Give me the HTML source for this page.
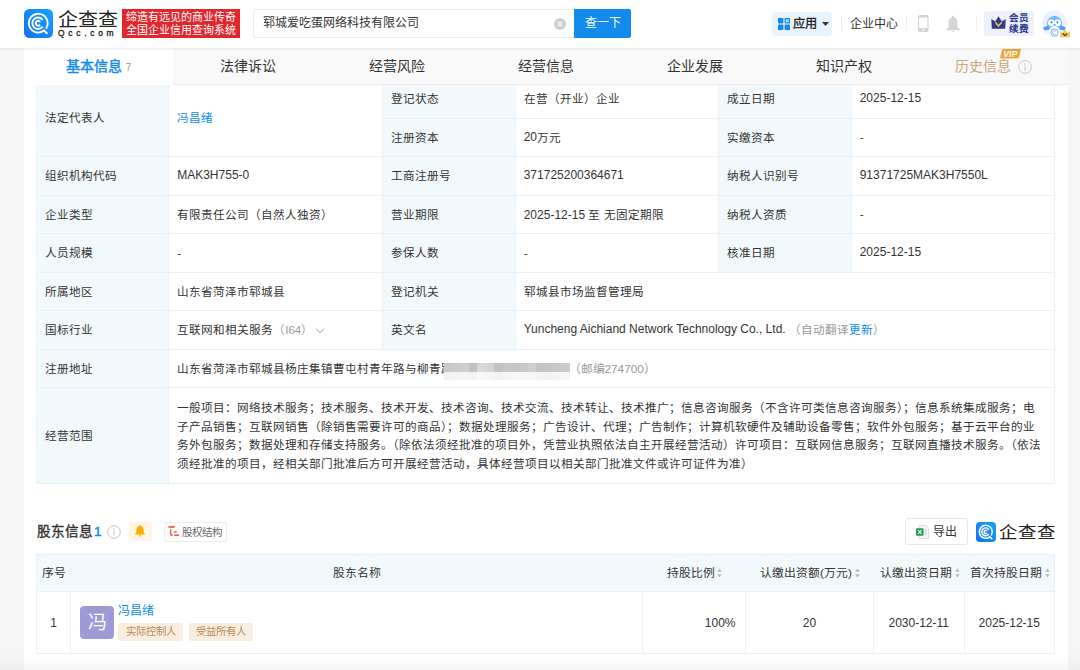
<!DOCTYPE html>
<html lang="zh-CN">
<head>
<meta charset="utf-8">
<style>
*{box-sizing:border-box;margin:0;padding:0}
html,body{width:1080px;height:670px;overflow:hidden}
body{position:relative;background:#f6f6f6;font-family:"Liberation Sans",sans-serif;color:#333;font-size:11.8px}
.abs{position:absolute}
.nw{white-space:nowrap}
/* header */
#hdr{position:absolute;left:0;top:0;width:1080px;height:48px;background:#fff;box-shadow:0 1px 2px rgba(0,0,0,.09);z-index:5}
#card{position:absolute;left:24px;top:48px;width:1044px;height:622px;background:#fff}
/* tabs */
#tabs{position:absolute;left:24px;top:48px;width:1044px;height:36.8px;background:#f9f9f9;border-bottom:1px solid #ececec;z-index:4}
.tab{position:absolute;top:0;height:36px;width:149.14px;text-align:center;line-height:37.4px;font-size:14px;color:#333}
.tab.on{background:#fff;color:#128bed;height:37px;-webkit-text-stroke:0.45px #128bed}
/* table */
.cell{position:absolute;border-right:1px solid #e9f1f8;border-bottom:1px solid #e9f1f8;padding-left:8.2px;padding-bottom:1px;display:flex;align-items:center;white-space:nowrap;font-size:11.6px;color:#333}
.en{font-size:12px}
.lb{background:#f2f9fc}
.blue{color:#128bed}
.grey{color:#999}
</style>
</head>
<body>
<div id="hdr">
  <!-- logo icon -->
  <svg class="abs" style="left:24px;top:9px" width="29" height="29" viewBox="0 0 29 29">
    <defs><linearGradient id="lg" x1="0" y1="1" x2="1" y2="0"><stop offset="0" stop-color="#1470f4"/><stop offset="1" stop-color="#16a3fb"/></linearGradient></defs>
    <rect width="29" height="29" rx="5.5" fill="url(#lg)"/>
    <g fill="none" stroke="#fff" stroke-width="1.9" stroke-linecap="round">
      <path d="M20.0 21.6 A9.4 9.4 0 1 1 22.3 19.0"/>
      <path d="M20.1 21.6 L22.9 24.2"/>
      <path d="M18.2 18.2 A5.7 5.7 0 1 1 18.2 10.3"/>
      <path d="M15.6 16.3 A2.4 2.4 0 1 1 15.7 12.4"/>
    </g>
  </svg>
  <div class="abs nw" style="left:57.5px;top:9.3px;font-size:20px;line-height:24px;letter-spacing:0.4px;color:#222;transform:scaleY(0.9);transform-origin:0 0">企查查</div>
  <div class="abs nw" style="left:58px;top:28px;font-size:8.4px;line-height:10px;letter-spacing:3.75px;color:#222;-webkit-text-stroke:0.3px #222">Qcc.com</div>
  <!-- red slogan -->
  <div class="abs" style="left:122px;top:9px;width:118px;height:29px;background:#e3262c;color:#fff;font-size:11px;line-height:12.3px;padding-top:2.3px;text-align:center;white-space:nowrap">缔造有远见的商业传奇<br>全国企业信用查询系统</div>
  <!-- search -->
  <div class="abs" style="left:253px;top:9px;width:322px;height:29px;border:1px solid #ececec;border-right:none;border-radius:3px 0 0 3px;background:#fff"></div>
  <div class="abs nw" style="left:263px;top:15px;font-size:12px;line-height:17px;color:#333">郓城爱吃蛋网络科技有限公司</div>
  <div class="abs" style="left:554px;top:17.7px;width:12px;height:12px;border-radius:50%;background:#cfcfcf"></div>
  <svg class="abs" style="left:554px;top:17.7px" width="12" height="12" viewBox="0 0 12 12"><path d="M4 4 L8 8 M8 4 L4 8" stroke="#fff" stroke-width="1.1"/></svg>
  <div class="abs" style="left:574px;top:9px;width:57px;height:29px;background:#128bed;border-radius:0 2px 2px 0;color:#fff;font-size:12px;line-height:28px;text-align:center">查一下</div>
  <!-- app -->
  <div class="abs" style="left:772px;top:12px;width:60px;height:23.5px;background:#e8f3fe;border-radius:4px"></div>
  <svg class="abs" style="left:777.5px;top:18px" width="12" height="12" viewBox="0 0 12 12">
    <rect x="0" y="0" width="5.4" height="5.4" rx="0.6" fill="#128bed"/>
    <rect x="6.6" y="0" width="5.4" height="5.4" rx="0.6" fill="#128bed"/>
    <rect x="7.8" y="1.2" width="3" height="3" rx="0.3" fill="#b9dcfb"/>
    <rect x="0" y="6.6" width="5.4" height="5.4" rx="0.6" fill="#128bed"/>
    <rect x="6.6" y="6.6" width="5.4" height="5.4" rx="0.6" fill="#128bed"/>
  </svg>
  <div class="abs nw" style="left:793px;top:15px;font-size:12.2px;line-height:18px;color:#222;-webkit-text-stroke:0.35px #222">应用</div>
  <svg class="abs" style="left:821.5px;top:21.5px" width="7" height="4" viewBox="0 0 7 4"><path d="M0 0 L7 0 L3.5 4 Z" fill="#333"/></svg>
  <div class="abs" style="left:841px;top:15px;width:1px;height:16px;background:#eee"></div>
  <div class="abs nw" style="left:849.5px;top:14.5px;font-size:12px;line-height:18px;color:#333">企业中心</div>
  <div class="abs" style="left:906px;top:15px;width:1px;height:16px;background:#eee"></div>
  <!-- phone -->
  <svg class="abs" style="left:918px;top:15px" width="10.5" height="17" viewBox="0 0 10.5 17"><rect x="0" y="0" width="10.5" height="17" rx="2.2" fill="#d2d2d2"/><rect x="1.1" y="2.5" width="8.3" height="10.7" fill="#fff"/><rect x="3.9" y="14.6" width="2.7" height="1.2" rx="0.6" fill="#fff"/></svg>
  <!-- bell -->
  <svg class="abs" style="left:946px;top:15px" width="14" height="17" viewBox="0 0 14 17">
    <path d="M7 0.6 C7.6 0.6 7.9 1 7.9 1.6 L7.9 2.3 C10.3 2.8 11.4 4.8 11.4 7.5 L11.4 12.8 L14 14.6 L14 15.2 L0 15.2 L0 14.6 L2.6 12.8 L2.6 7.5 C2.6 4.8 3.7 2.8 6.1 2.3 L6.1 1.6 C6.1 1 6.4 0.6 7 0.6 Z" fill="#d4d4d4"/>
    <rect x="5.8" y="15.9" width="2.4" height="1.1" rx="0.5" fill="#d4d4d4"/>
  </svg>
  <div class="abs" style="left:975.5px;top:15.5px;width:1px;height:15.5px;background:#eee"></div>
  <!-- vip -->
  <div class="abs" style="left:984px;top:11px;width:49.5px;height:25px;background:#eef1fb;border-radius:3px"></div>
  <svg class="abs" style="left:990.5px;top:15.5px" width="15" height="13" viewBox="0 0 15 13">
    <path d="M0.3 3 L4.2 5.6 L7.5 0.3 L10.8 5.6 L14.7 3 L14.2 12.7 L0.8 12.7 Z" fill="#2e3a8c"/>
    <path d="M4.8 6.8 L7.5 10 L10.2 6.8" fill="none" stroke="#f5c04a" stroke-width="1.6" stroke-linecap="round" stroke-linejoin="round"/>
  </svg>
  <div class="abs nw" style="left:1008.5px;top:12px;font-size:9.6px;line-height:11px;font-weight:bold;color:#2e3a8c">会员<br>续费</div>
  <!-- avatar -->
  <svg class="abs" style="left:1036px;top:6px" width="40" height="36" viewBox="0 0 40 36">
    <circle cx="18.5" cy="17.2" r="12.6" fill="#eaf3fd"/>
    <ellipse cx="18.5" cy="18" rx="7.6" ry="8" fill="#74b8f7"/>
    <path d="M18.5 9.6 L19.6 11 L17.4 11 Z" fill="#5aa6f4"/>
    <path d="M12.2 19.5 L7 21.6 L8.6 24.6 L13.5 23.4 Z M24.8 19.5 L30 21.6 L28.4 24.6 L23.5 23.4 Z" fill="#4a9ff5"/>
    <circle cx="15.4" cy="16.8" r="3.4" fill="#fff"/><circle cx="21.6" cy="16.8" r="3.4" fill="#fff"/>
    <ellipse cx="18.5" cy="25.5" rx="5.6" ry="5.4" fill="#fff"/>
    <ellipse cx="15.6" cy="16.2" rx="0.9" ry="1.3" fill="#2f8ff0"/><ellipse cx="21.4" cy="16.2" rx="0.9" ry="1.3" fill="#2f8ff0"/>
    <ellipse cx="18.6" cy="18.6" rx="1.2" ry="0.7" fill="#4aa0f5"/>
    <circle cx="18.5" cy="26.6" r="3.7" fill="none" stroke="#6aaef5" stroke-width="0.9"/>
    <path d="M19.8 25.2 A1.9 1.9 0 1 0 19.8 28" fill="none" stroke="#6aaef5" stroke-width="0.9"/>
    <path d="M24.2 31.3 L24.2 25.2 L26.6 27 L29 23.6 L31.4 27 L33.9 25.2 L33.9 31.3 Z" fill="#f6c54a"/>
    <path d="M26.7 27.4 L29 29.6 L31.3 27.4" fill="none" stroke="#3d3d5c" stroke-width="1.2"/>
  </svg>
</div>

<div id="card"></div>

<div id="tabs">
  <div class="tab on" style="left:0">基本信息 <span style="font-size:10px;color:#999;-webkit-text-stroke:0">7</span></div>
  <div class="tab" style="left:149.14px">法律诉讼</div>
  <div class="tab" style="left:298.28px">经营风险</div>
  <div class="tab" style="left:447.42px">经营信息</div>
  <div class="tab" style="left:596.56px">企业发展</div>
  <div class="tab" style="left:745.7px">知识产权</div>
  <div class="tab" style="left:894.84px;color:#c9a47e">历史信息<span style="display:inline-block;width:21px"></span></div>
  <svg class="abs" style="left:976.3px;top:1.3px" width="21" height="9.5" viewBox="0 0 21 9.5"><path d="M3 0 L21 0 L19.5 7 Q19 9.5 16.5 9.5 L0 9.5 L1.5 2.5 Q2 0 3 0 Z" fill="#f0a43a"/><text x="10.3" y="8" font-family="Liberation Sans" font-size="8.6" font-weight="bold" font-style="italic" fill="#fff" text-anchor="middle">VIP</text></svg>
  <svg class="abs" style="left:993.5px;top:11.7px" width="14" height="14" viewBox="0 0 14 14"><circle cx="7" cy="7" r="6.3" fill="none" stroke="#c8c8c8" stroke-width="1"/><circle cx="7" cy="4.1" r="0.8" fill="#c8c8c8"/><path d="M7 6 L7 10.4" stroke="#c8c8c8" stroke-width="1.1"/></svg>

</div>


<div id="tbl">
<div class="cell lb" style="left:36px;top:80px;width:133px;height:77px;border-left:1px solid #e9f1f8;padding-bottom:3px">法定代表人</div>
<div class="cell" style="left:169px;top:80px;width:214px;height:77px;padding-bottom:3px"><span class="blue">冯昌绪</span></div>
<div class="cell lb" style="left:383px;top:80px;width:132.5px;height:38.5px;">登记状态</div>
<div class="cell" style="left:515.5px;top:80px;width:203px;height:38.5px;">在营（开业）企业</div>
<div class="cell lb" style="left:718.5px;top:80px;width:133px;height:38.5px;">成立日期</div>
<div class="cell" style="left:851.5px;top:80px;width:203.5px;height:38.5px;"><span class="en">2025-12-15</span></div>
<div class="cell lb" style="left:383px;top:118.5px;width:132.5px;height:38.5px;">注册资本</div>
<div class="cell" style="left:515.5px;top:118.5px;width:203px;height:38.5px;"><span class="en">20</span>万元</div>
<div class="cell lb" style="left:718.5px;top:118.5px;width:133px;height:38.5px;">实缴资本</div>
<div class="cell" style="left:851.5px;top:118.5px;width:203.5px;height:38.5px;">-</div>
<div class="cell lb" style="left:36px;top:157px;width:133px;height:38.5px;border-left:1px solid #e9f1f8;">组织机构代码</div>
<div class="cell" style="left:169px;top:157px;width:214px;height:38.5px;"><span class="en">MAK3H755-0</span></div>
<div class="cell lb" style="left:383px;top:157px;width:132.5px;height:38.5px;">工商注册号</div>
<div class="cell" style="left:515.5px;top:157px;width:203px;height:38.5px;"><span class="en">371725200364671</span></div>
<div class="cell lb" style="left:718.5px;top:157px;width:133px;height:38.5px;">纳税人识别号</div>
<div class="cell" style="left:851.5px;top:157px;width:203.5px;height:38.5px;"><span class="en">91371725MAK3H7550L</span></div>
<div class="cell lb" style="left:36px;top:195.5px;width:133px;height:38.5px;border-left:1px solid #e9f1f8;">企业类型</div>
<div class="cell" style="left:169px;top:195.5px;width:214px;height:38.5px;">有限责任公司（自然人独资）</div>
<div class="cell lb" style="left:383px;top:195.5px;width:132.5px;height:38.5px;">营业期限</div>
<div class="cell" style="left:515.5px;top:195.5px;width:203px;height:38.5px;"><span><span class="en">2025-12-15 </span>至<span class="en"> </span>无固定期限</span></div>
<div class="cell lb" style="left:718.5px;top:195.5px;width:133px;height:38.5px;">纳税人资质</div>
<div class="cell" style="left:851.5px;top:195.5px;width:203.5px;height:38.5px;">-</div>
<div class="cell lb" style="left:36px;top:234px;width:133px;height:38.5px;border-left:1px solid #e9f1f8;">人员规模</div>
<div class="cell" style="left:169px;top:234px;width:214px;height:38.5px;">-</div>
<div class="cell lb" style="left:383px;top:234px;width:132.5px;height:38.5px;">参保人数</div>
<div class="cell" style="left:515.5px;top:234px;width:203px;height:38.5px;">-</div>
<div class="cell lb" style="left:718.5px;top:234px;width:133px;height:38.5px;">核准日期</div>
<div class="cell" style="left:851.5px;top:234px;width:203.5px;height:38.5px;"><span class="en">2025-12-15</span></div>
<div class="cell lb" style="left:36px;top:272.5px;width:133px;height:38.5px;border-left:1px solid #e9f1f8;">所属地区</div>
<div class="cell" style="left:169px;top:272.5px;width:214px;height:38.5px;">山东省菏泽市郓城县</div>
<div class="cell lb" style="left:383px;top:272.5px;width:132.5px;height:38.5px;">登记机关</div>
<div class="cell" style="left:515.5px;top:272.5px;width:539.5px;height:38.5px;">郓城县市场监督管理局</div>
<div class="cell lb" style="left:36px;top:311px;width:133px;height:38.5px;border-left:1px solid #e9f1f8;">国标行业</div>
<div class="cell" style="left:169px;top:311px;width:214px;height:38.5px;">互联网和相关服务<span class="grey">（I64）</span><svg style="margin-left:2px;position:relative;top:1.5px" width="10" height="6" viewBox="0 0 10 6"><path d="M1 0.8 L5 4.8 L9 0.8" fill="none" stroke="#999" stroke-width="1"/></svg></div>
<div class="cell lb" style="left:383px;top:311px;width:132.5px;height:38.5px;">英文名</div>
<div class="cell" style="left:515.5px;top:311px;width:539.5px;height:38.5px;"><span class="en">Yuncheng Aichiand Network Technology Co., Ltd.</span><span class="grey" style="margin-left:3.3px">（自动翻译<span class="blue">更新</span>）</span></div>
<div class="cell lb" style="left:36px;top:349.5px;width:133px;height:38.5px;border-left:1px solid #e9f1f8;">注册地址</div>
<div class="cell" style="left:169px;top:349.5px;width:886px;height:38.5px;">山东省菏泽市郓城县杨庄集镇曹屯村青年路与柳青路</div>
<div class="cell lb" style="left:36px;top:388px;width:133px;height:95.5px;border-left:1px solid #e9f1f8;">经营范围</div>
<div class="cell" style="left:169px;top:388px;width:886px;height:95.5px;line-height:18.5px;padding-bottom:0;padding-top:1.5px"><div>一般项目：网络技术服务；技术服务、技术开发、技术咨询、技术交流、技术转让、技术推广；信息咨询服务（不含许可类信息咨询服务）；信息系统集成服务；电<br>子产品销售；互联网销售（除销售需要许可的商品）；数据处理服务；广告设计、代理；广告制作；计算机软硬件及辅助设备零售；软件外包服务；基于云平台的业<br>务外包服务；数据处理和存储支持服务。（除依法须经批准的项目外，凭营业执照依法自主开展经营活动）许可项目：互联网信息服务；互联网直播技术服务。（依法<br>须经批准的项目，经相关部门批准后方可开展经营活动，具体经营项目以相关部门批准文件或许可证件为准）</div></div>
<div class="abs" style="left:444px;top:362.6px;width:125.6px;height:17.6px;overflow:hidden;background:#fff"><div class="abs" style="left:0.00px;top:0;width:8.67px;height:9.4px;background:#c9c9c9"></div><div class="abs" style="left:0.00px;top:9.4px;width:8.67px;height:7.8px;background:#f2f2f2"></div><div class="abs" style="left:8.37px;top:0;width:8.67px;height:9.4px;background:#cccccc"></div><div class="abs" style="left:8.37px;top:9.4px;width:8.67px;height:7.8px;background:#f4f4f4"></div><div class="abs" style="left:16.75px;top:0;width:8.67px;height:9.4px;background:#cfcfcf"></div><div class="abs" style="left:16.75px;top:9.4px;width:8.67px;height:7.8px;background:#f5f5f5"></div><div class="abs" style="left:25.12px;top:0;width:8.67px;height:9.4px;background:#c2c2c2"></div><div class="abs" style="left:25.12px;top:9.4px;width:8.67px;height:7.8px;background:#f3f3f3"></div><div class="abs" style="left:33.49px;top:0;width:8.67px;height:9.4px;background:#d8d8d8"></div><div class="abs" style="left:33.49px;top:9.4px;width:8.67px;height:7.8px;background:#f7f7f7"></div><div class="abs" style="left:41.87px;top:0;width:8.67px;height:9.4px;background:#d5d5d5"></div><div class="abs" style="left:41.87px;top:9.4px;width:8.67px;height:7.8px;background:#f6f6f6"></div><div class="abs" style="left:50.24px;top:0;width:8.67px;height:9.4px;background:#c3c3c3"></div><div class="abs" style="left:50.24px;top:9.4px;width:8.67px;height:7.8px;background:#f2f2f2"></div><div class="abs" style="left:58.61px;top:0;width:8.67px;height:9.4px;background:#c8c8c8"></div><div class="abs" style="left:58.61px;top:9.4px;width:8.67px;height:7.8px;background:#f5f5f5"></div><div class="abs" style="left:66.99px;top:0;width:8.67px;height:9.4px;background:#c5c5c5"></div><div class="abs" style="left:66.99px;top:9.4px;width:8.67px;height:7.8px;background:#f7f7f7"></div><div class="abs" style="left:75.36px;top:0;width:8.67px;height:9.4px;background:#c8c8c8"></div><div class="abs" style="left:75.36px;top:9.4px;width:8.67px;height:7.8px;background:#f8f8f8"></div><div class="abs" style="left:83.73px;top:0;width:8.67px;height:9.4px;background:#cecece"></div><div class="abs" style="left:83.73px;top:9.4px;width:8.67px;height:7.8px;background:#f6f6f6"></div><div class="abs" style="left:92.11px;top:0;width:8.67px;height:9.4px;background:#c2c2c2"></div><div class="abs" style="left:92.11px;top:9.4px;width:8.67px;height:7.8px;background:#f3f3f3"></div><div class="abs" style="left:100.48px;top:0;width:8.67px;height:9.4px;background:#c6c6c6"></div><div class="abs" style="left:100.48px;top:9.4px;width:8.67px;height:7.8px;background:#f1f1f1"></div><div class="abs" style="left:108.85px;top:0;width:8.67px;height:9.4px;background:#c9c9c9"></div><div class="abs" style="left:108.85px;top:9.4px;width:8.67px;height:7.8px;background:#f4f4f4"></div><div class="abs" style="left:117.23px;top:0;width:8.67px;height:9.4px;background:#cbcbcb"></div><div class="abs" style="left:117.23px;top:9.4px;width:8.67px;height:7.8px;background:#f6f6f6"></div></div>
<div class="abs nw grey" style="left:568.5px;top:359.5px;line-height:18px">（邮编274700）</div>
</div>


<div id="sec2">
  <div class="abs nw" style="left:36.5px;top:521.5px;font-size:13.6px;line-height:20px;color:#333;-webkit-text-stroke:0.4px #333">股东信息<span style="color:#128bed;margin-left:1.5px;-webkit-text-stroke:0.5px #128bed">1</span></div>
  <svg class="abs" style="left:107.4px;top:524.9px" width="14" height="14" viewBox="0 0 14 14"><circle cx="7" cy="7" r="6.3" fill="none" stroke="#c4c4c4" stroke-width="1"/><circle cx="7" cy="4.1" r="0.8" fill="#c4c4c4"/><path d="M7 6 L7 10.4" stroke="#c4c4c4" stroke-width="1.1"/></svg>
  <div class="abs" style="left:129px;top:521.5px;width:22.5px;height:19px;background:#fff5e5;border-radius:2px"></div>
  <svg class="abs" style="left:135.4px;top:525px" width="10" height="11.5" viewBox="0 0 10 11.5"><path d="M5 0 C5.6 0 5.9 0.4 5.9 0.9 C7.8 1.4 8.6 3 8.6 5 L8.6 7.6 L10 9 L10 9.6 L0 9.6 L0 9 L1.4 7.6 L1.4 5 C1.4 3 2.2 1.4 4.1 0.9 C4.1 0.4 4.4 0 5 0 Z M3.6 10.2 L6.4 10.2 C6.2 11 5.7 11.5 5 11.5 C4.3 11.5 3.8 11 3.6 10.2 Z" fill="#ffaa00"/></svg>
  <div class="abs" style="left:164px;top:522px;width:63px;height:19.6px;border:1px solid #ededed;border-radius:2px;background:#fff"></div>
  <svg class="abs" style="left:168px;top:526px" width="11" height="11" viewBox="0 0 11 11"><defs><linearGradient id="og" x1="0" y1="0" x2="1" y2="1"><stop offset="0" stop-color="#ff7a2e"/><stop offset="1" stop-color="#e8344a"/></linearGradient></defs><g fill="url(#og)"><rect x="0.1" y="0.1" width="6.6" height="1.7" rx="0.8"/><rect x="6" y="5.2" width="2.8" height="1.5" rx="0.7"/><rect x="6" y="8.3" width="4.9" height="1.7" rx="0.8"/></g><path d="M2.6 3.2 L2.6 8 Q2.6 9.2 4 9.2" fill="none" stroke="url(#og)" stroke-width="1.5" stroke-linecap="round"/></svg>
  <div class="abs nw" style="left:181.5px;top:524px;font-size:10.5px;line-height:16px;color:#666">股权结构</div>

  <div class="abs" style="left:905px;top:518px;width:62.5px;height:26.8px;border:1px solid #e8e8e8;border-radius:3px;background:#fff"></div>
  <svg class="abs" style="left:915.5px;top:524.5px" width="13" height="14" viewBox="0 0 13 14"><path d="M3 0.5 L10 0.5 L12.5 3 L12.5 13.5 L3 13.5 Z" fill="#f4f4f4" stroke="#d4d4d4" stroke-width="0.8"/><path d="M8 5 L11 5 M8 7 L11 7 M8 9 L11 9" stroke="#c8c8c8" stroke-width="0.7"/><rect x="0" y="3.3" width="7.5" height="7.5" rx="0.8" fill="#1f9d55"/><path d="M2 5.2 L5.5 9 M5.5 5.2 L2 9" stroke="#fff" stroke-width="1.1"/></svg>
  <div class="abs nw" style="left:933px;top:524px;font-size:12px;line-height:17px;color:#333">导出</div>
  <svg class="abs" style="left:975.8px;top:521.7px" width="20" height="20" viewBox="0 0 29 29">
    <defs><linearGradient id="lg2" x1="0" y1="1" x2="1" y2="0"><stop offset="0" stop-color="#1470f4"/><stop offset="1" stop-color="#16a3fb"/></linearGradient></defs>
    <rect width="29" height="29" rx="5.5" fill="url(#lg2)"/>
    <g fill="none" stroke="#fff" stroke-width="2.1" stroke-linecap="round">
      <path d="M20.0 21.6 A9.4 9.4 0 1 1 22.3 19.0"/>
      <path d="M20.1 21.6 L22.9 24.2"/>
      <path d="M18.2 18.2 A5.7 5.7 0 1 1 18.2 10.3"/>
      <path d="M15.6 16.3 A2.4 2.4 0 1 1 15.7 12.4"/>
    </g>
  </svg>
  <div class="abs nw" style="left:998.5px;top:521.5px;font-size:18.5px;line-height:24px;color:#222;font-weight:300;transform:scaleY(0.88);transform-origin:0 0">企查查</div>

  <!-- table 2 -->
  <div class="abs" style="left:36px;top:554px;width:1019px;height:37.5px;background:#f2f9fc;border:1px solid #e9f1f8;border-bottom:1px solid #e9f1f8"></div>
  <div class="abs nw" style="left:42px;top:565px;line-height:17px">序号</div>
  <div class="abs nw" style="left:333px;top:565px;line-height:17px">股东名称</div>
  <div class="abs nw" style="left:666.5px;top:565px;line-height:17px">持股比例</div>
  <div class="abs nw" style="left:760px;top:565px;line-height:17px">认缴出资额(万元)</div>
  <div class="abs nw" style="left:880px;top:565px;line-height:17px">认缴出资日期</div>
  <div class="abs nw" style="left:970px;top:565px;line-height:17px">首次持股日期</div>
  <svg class="abs" style="left:717.3px;top:567.5px" width="5" height="10" viewBox="0 0 5 10"><path d="M2.5 0.5 L4.8 3.8 L0.2 3.8 Z M2.5 9.5 L4.8 6.2 L0.2 6.2 Z" fill="#b8b8b8"/></svg><svg class="abs" style="left:854.9px;top:567.5px" width="5" height="10" viewBox="0 0 5 10"><path d="M2.5 0.5 L4.8 3.8 L0.2 3.8 Z M2.5 9.5 L4.8 6.2 L0.2 6.2 Z" fill="#b8b8b8"/></svg><svg class="abs" style="left:954.8px;top:567.5px" width="5" height="10" viewBox="0 0 5 10"><path d="M2.5 0.5 L4.8 3.8 L0.2 3.8 Z M2.5 9.5 L4.8 6.2 L0.2 6.2 Z" fill="#b8b8b8"/></svg><svg class="abs" style="left:1045.2px;top:567.5px" width="5" height="10" viewBox="0 0 5 10"><path d="M2.5 0.5 L4.8 3.8 L0.2 3.8 Z M2.5 9.5 L4.8 6.2 L0.2 6.2 Z" fill="#b8b8b8"/></svg>
  <div class="cell" style="left:36px;top:591.5px;width:35px;height:62px;padding-top:1px !important;border-left:1px solid #e9f1f8;padding:0;justify-content:center"><span class="en">1</span></div>
  <div class="cell" style="left:71px;top:591.5px;width:572px;height:62px;padding-top:1px !important;"></div>
  <div class="cell" style="left:643px;top:591.5px;width:103px;height:62px;padding-top:1px !important;justify-content:flex-end;padding:0 9.5px 0 0"><span class="en">100%</span></div>
  <div class="cell" style="left:746px;top:591.5px;width:128px;height:62px;padding-top:1px !important;justify-content:center;padding:0"><span class="en">20</span></div>
  <div class="cell" style="left:874px;top:591.5px;width:90.5px;height:62px;padding-top:1px !important;justify-content:center;padding:0"><span class="en">2030-12-11</span></div>
  <div class="cell" style="left:964.5px;top:591.5px;width:90.5px;height:62px;padding-top:1px !important;justify-content:center;padding:0"><span class="en">2025-12-15</span></div>
  <div class="abs" style="left:80px;top:606px;width:34px;height:33px;background:#9e9ad8;border-radius:4px;color:#fff;font-size:19px;line-height:33px;text-align:center">冯</div>
  <div class="abs nw blue" style="left:118px;top:603px;font-size:12px;line-height:17px">冯昌绪</div>
  <div class="abs nw" style="left:118.4px;top:623px;width:64.7px;height:18px;background:#f8eedf;color:#b98a5a;font-size:10.4px;line-height:18px;text-align:center;border-radius:2px">实际控制人</div>
  <div class="abs nw" style="left:188.6px;top:623px;width:64.4px;height:18px;background:#f8eedf;color:#b98a5a;font-size:10.4px;line-height:18px;text-align:center;border-radius:2px">受益所有人</div>
</div>

<div class="abs" style="left:0;top:654px;width:1080px;height:16px;background:linear-gradient(rgba(0,0,0,0),rgba(0,0,0,0.035));z-index:6"></div>
</body>
</html>
